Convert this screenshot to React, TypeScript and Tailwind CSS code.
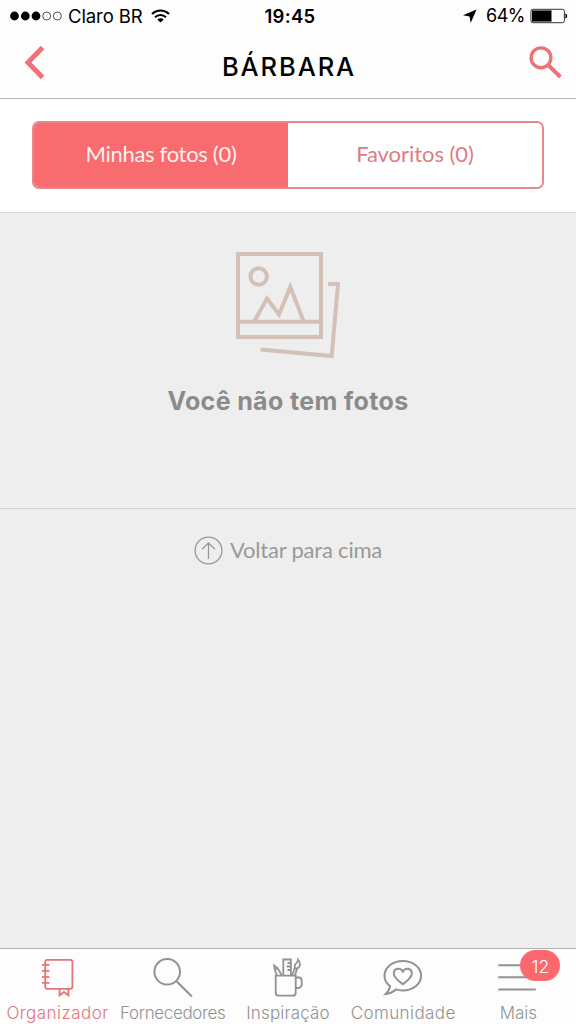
import React from 'react';
import clsx from 'clsx';

const tabs = [
  { id: 'organizer', label: 'Organizador', spacing: 'tracking-[0.46px]' },
  { id: 'vendors', label: 'Fornecedores', spacing: 'tracking-[-0.36px]' },
  { id: 'inspiration', label: 'Inspiração', spacing: 'tracking-[0.15px]' },
  { id: 'community', label: 'Comunidade', spacing: 'tracking-[0.4px]' },
  { id: 'more', label: 'Mais', spacing: 'tracking-[0px]', badge: 12 },
];

const iconPaths: Record<string, React.ReactNode> = {
  organizer: (
    <>
      <rect x="7.2" y="2.8" width="27.2" height="29" rx="2" />
      <path d="M4 7.8h7.4M4 13.8h7.4M4 19.8h7.4M4 25.8h7.4" />
      <path d="M21.6 31.8v6.6l4.4-3.4 4.4 3.4v-6.6" />
    </>
  ),
  vendors: (
    <>
      <circle cx="14.2" cy="14.8" r="12.8" />
      <path d="m23.5 24.3 15.4 15.2" />
    </>
  ),
  inspiration: (
    <>
      <path d="M7.7 18.7h20v17a3 3 0 0 1-3 3h-14a3 3 0 0 1-3-3z" />
      <path d="M27.7 20.5h3a3 3 0 0 1 3 3v4a3.5 3.5 0 0 1-3.5 3.5h-2.5" />
      <path d="M15.3 18.5v-16h7.6v16M22.9 6h-3.4M22.9 9.5h-4.2M22.9 13h-3.4" />
      <path d="m8.8 18.5-2-6-.7-4 3.5 2.5 4.3 7.5M6.8 12.5l2.8-1.3" />
      <path d="M30 2.5c3 3.5 2.4 8-1.1 9-3-.7-2.8-3.1-1-4.8 1.3-1.2 2-2.4 2.1-4.2zM26.8 11l2.2 1-2 6.5M26.8 11l-2.6 7.5" />
    </>
  ),
  community: (
    <>
      <path d="M7.2 29.2C3.7 26.8 1.5 23 1.5 18.8 1.5 10.5 9.7 4 19.8 4S38.1 10.5 38.1 18.8 29.9 33.5 19.8 33.5c-2.5 0-4.7-.3-6.9-1.1C10 35 6.5 36.5 2.8 37c2.2-2.2 3.7-4.8 4.4-7.8z" />
      <path d="M19.8 27.2c-4-3.1-9-6.5-9-10.8 0-5.4 6.7-6.4 9-1.8 2.3-4.6 9-3.6 9 1.8 0 4.3-5 7.7-9 10.8z" />
    </>
  ),
  more: <path d="M.3 8.2h37.5M.3 20.2h37.5M.3 32.4h37.5" />,
};

const StatusBar = () => (
  <div className="grid h-8 grid-cols-3 items-center pl-[10px] pr-2 text-[18.5px] leading-8 text-black">
    <div className="flex items-center">
      <svg className="h-[10px] w-[53px]" viewBox="0 0 53 10">
        <circle cx="4.5" cy="5" r="4.4" />
        <circle cx="15.3" cy="5" r="4.4" />
        <circle cx="26" cy="5" r="4.4" />
        <circle cx="36.7" cy="5" r="4" fill="none" stroke="#222" strokeWidth=".8" />
        <circle cx="47.4" cy="5" r="4" fill="none" stroke="#222" strokeWidth=".8" />
      </svg>
      <span className="ml-[5px] whitespace-nowrap tracking-[-0.1px]">Claro BR</span>
      <svg className="ml-[8px] h-[14px] w-[19px] shrink-0" viewBox="0 0 19 14" fill="none" stroke="#000" strokeWidth="2.1">
        <path d="M1 4.9c4.9-4.6 12.1-4.6 17 0M4 8.2c3.2-3 7.8-3 11 0" />
        <path d="M6.3 10.5c1.9-1.7 4.5-1.7 6.4 0l-3.2 3z" fill="#000" stroke="none" />
      </svg>
    </div>
    <div className="pl-0.5 text-center font-semibold tracking-[0.3px]">19:45</div>
    <div className="flex items-center justify-end">
      <svg className="mr-[9px] h-[14px] w-[14px]" viewBox="0 0 14 14">
        <path d="M13.5.5 7.7 14 6.6 7.4 0 6.2z" />
      </svg>
      <span className="text-[18px] tracking-[-0.5px]">64%</span>
      <svg className="ml-[5px] h-4 w-[38px]" viewBox="0 0 38 16">
        <rect x=".9" y="1.3" width="33.5" height="13.4" rx="2" fill="none" stroke="#333" />
        <path d="M2 2.4h19.5v11.2H2z" />
        <path d="M35.4 5.5c2.4.4 2.4 4.6 0 5z" />
      </svg>
    </div>
  </div>
);

const Header = () => (
  <header className="flex h-[66px] items-center justify-between px-3.5">
    <svg className="-mt-1 h-9 w-10" viewBox="0 0 40 36" fill="none" stroke="#ec7478" strokeWidth="5">
      <path d="M28.6 2.6 14 17.6l14.6 15" />
    </svg>
    <h1 className="mt-1 pl-[2px] text-[25.5px] font-medium tracking-[1.9px] text-black">BÁRBARA</h1>
    <svg className="-mt-1 h-9 w-10" viewBox="0 0 40 36" fill="none" stroke="#ec7478">
      <circle cx="19" cy="12.8" r="9.9" strokeWidth="3.4" />
      <path d="m26.2 20 12.2 12" strokeWidth="4" />
    </svg>
  </header>
);

const App = () => {
  const active = 'organizer';

  return (
    <div className="flex h-[1024px] w-[576px] flex-col overflow-hidden bg-[#eeeeee] font-['Inter','Liberation_Sans',sans-serif]">
      <div className="h-[99px] shrink-0 border-b border-[#b7b7b9] bg-[#fdfdfd]">
        <StatusBar />
        <Header />
      </div>

      {/* Photo filter */}
      <div className="h-[114px] shrink-0 border-b border-[#d9d9d9] bg-white px-8 pt-[22px]">
        <div className="grid h-[68px] grid-cols-2 overflow-hidden rounded-[7px] border-2 border-[#e9868a] font-['Lato',sans-serif] text-[22px]">
          <button className="bg-[#f86c70] pb-[3px] tracking-[-0.3px] text-[#fff0ee]">Minhas fotos (0)</button>
          <button className="bg-white pb-[3px] tracking-[-0.05px] text-[#e07c80]">Favoritos (0)</button>
        </div>
      </div>

      <main className="flex flex-1 flex-col items-center">
        <section className="flex h-[296px] w-full flex-col items-center border-b border-[#d5d5d5] pt-[39px]">
          <svg className="h-[108px] w-[104px]" viewBox="0 0 104 108" fill="none" stroke="#d3c1b7" strokeWidth="4">
            <path d="M2 2h83v83H2zM2 69.7h83" />
            <circle cx="22.7" cy="24.5" r="8.2" />
            <path d="M18.5 69 31 46.5 43 62.5 54.3 35 67.5 69" />
            <path d="M92 32h10l-6.3 72L24.5 97.5" />
          </svg>
          <p className="mt-[23px] text-[25px] font-bold leading-9 tracking-[0.35px] text-[#8b8b8b]">Você não tem fotos</p>
        </section>
        <button className="mt-[26px] flex items-center gap-[7px] font-['Lato',sans-serif] text-[22px] leading-[30px] tracking-[-0.2px] text-[#999]">
          <svg className="h-[29px] w-[29px]" viewBox="0 0 29 29" fill="none" stroke="#999" strokeWidth="1.3">
            <circle cx="14.5" cy="14.5" r="13.4" />
            <path d="M14.5 23V7M8 13.3 14.5 7l6.5 6.3" />
          </svg>
          Voltar para cima
        </button>
      </main>

      <nav className="grid h-[76px] shrink-0 grid-cols-5 border-t border-[#b2b2b5] bg-[#fdfdfd] pt-2">
        {tabs.map((tab) => (
          <button
            key={tab.id}
            className={clsx('flex flex-col items-center', tab.id === active ? 'text-[#e57479]' : 'text-[#929292]')}
          >
            <span className="relative h-10 w-10">
              <svg
                className="h-10 w-10"
                viewBox="0 0 40 40"
                fill="none"
                stroke="currentColor"
                strokeWidth={tab.id === 'organizer' || tab.id === 'inspiration' ? 1.8 : 2}
              >
                {iconPaths[tab.id]}
              </svg>
              {tab.badge && (
                <span className="absolute -top-[7px] left-[22px] flex h-[31px] w-10 items-center justify-center rounded-full bg-[#fb696e] pt-[3px] text-[17.5px] font-light text-white">
                  {tab.badge}
                </span>
              )}
            </span>
            <span className={clsx('mt-1 whitespace-nowrap text-[17px] font-light leading-6', tab.spacing)}>
              {tab.label}
            </span>
          </button>
        ))}
      </nav>
    </div>
  );
};

export default App;
